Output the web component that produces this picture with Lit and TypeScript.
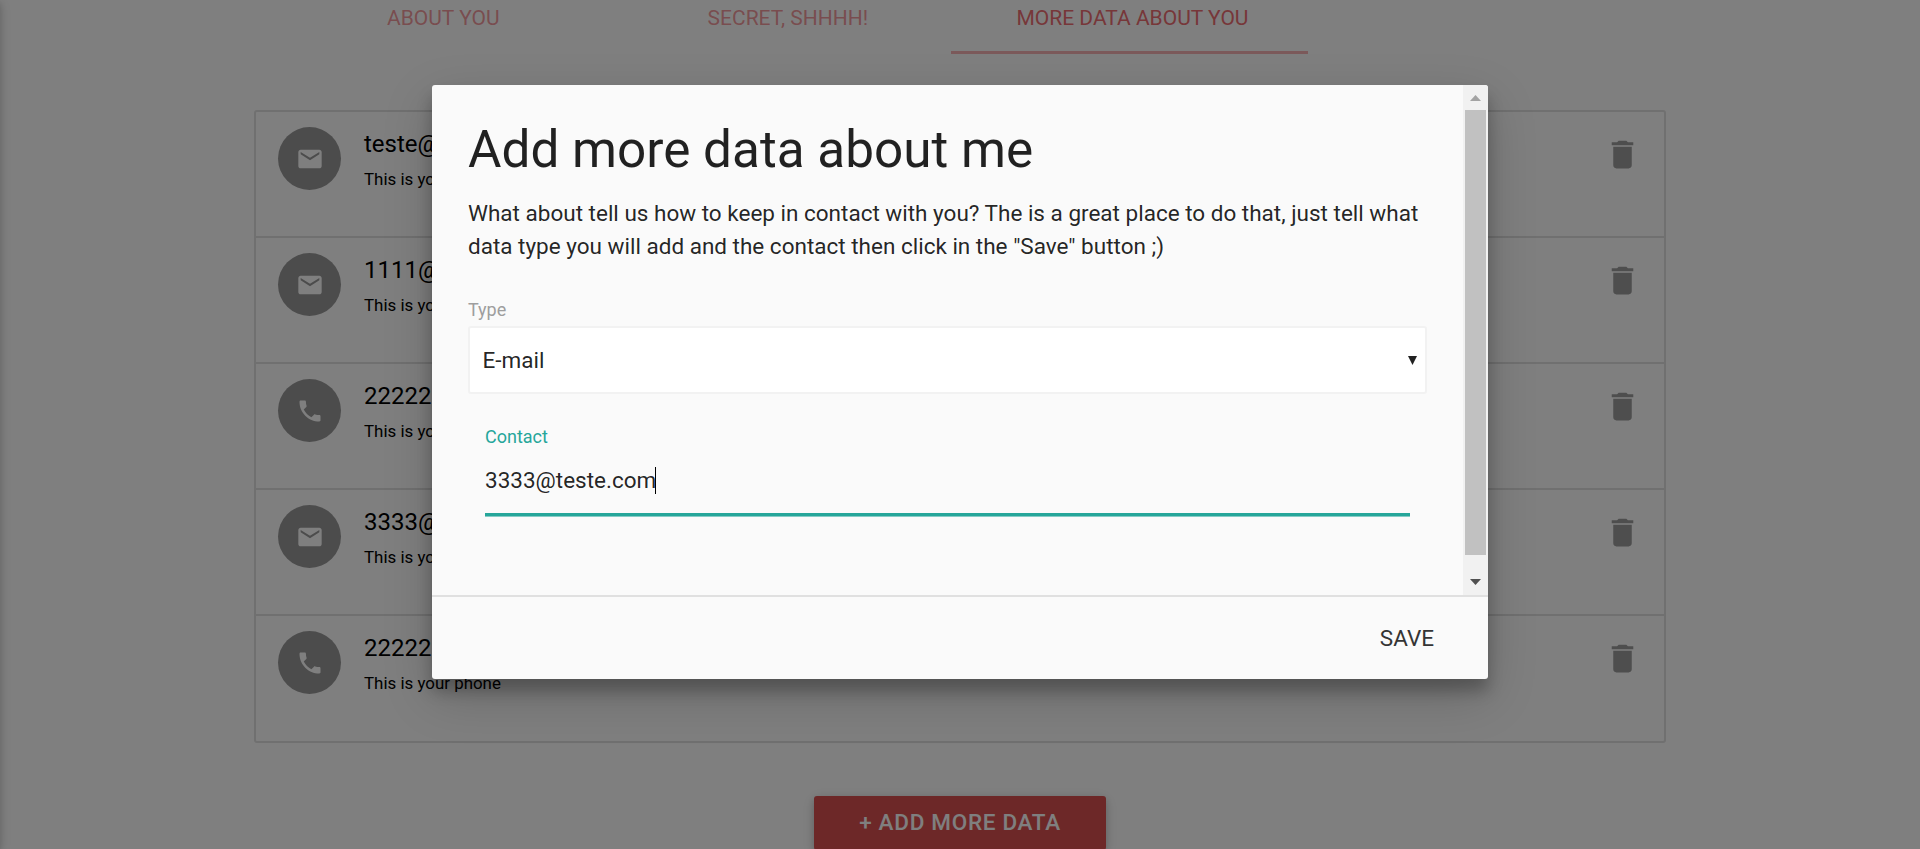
import { LitElement, html, css, svg } from "lit";
import { customElement } from "lit/decorators.js";

const MAIL = svg`<path d="M20 4H4c-1.1 0-1.99.9-1.99 2L2 18c0 1.1.9 2 2 2h16c1.1 0 2-.9 2-2V6c0-1.1-.9-2-2-2zm0 4l-8 5-8-5V6l8 5 8-5v2z"/>`;
const PHONE = svg`<path d="M6.62 10.79c1.44 2.83 3.76 5.14 6.59 6.59l2.2-2.2c.27-.27.67-.36 1.02-.24 1.12.37 2.33.57 3.57.57.55 0 1 .45 1 1V20c0 .55-.45 1-1 1-9.39 0-17-7.61-17-17 0-.55.45-1 1-1h3.5c.55 0 1 .45 1 1 0 1.25.2 2.45.57 3.57.11.35.03.74-.25 1.02l-2.2 2.2z"/>`;
const TRASH = svg`<path d="M6 19c0 1.1.9 2 2 2h8c1.1 0 2-.9 2-2V7H6v12zM19 4h-3.5l-1-1h-5l-1 1H5v2h14V4z"/>`;

const CONTACTS = [
  { kind: "e-mail", value: "teste@teste.com" },
  { kind: "e-mail", value: "1111@teste.com" },
  { kind: "phone", value: "2222222222" },
  { kind: "e-mail", value: "3333@teste.com" },
  { kind: "phone", value: "2222222222" },
];

@customElement("contact-list")
class ContactList extends LitElement {
  static styles = css`
    :host { display: block; }
    .list { box-sizing: border-box; border: 2px solid #e0e0e0; border-radius: 3px; }
    .row {
      box-sizing: border-box; height: 126px; padding: 15px 31px 0 22px;
      border-bottom: 2px solid #e0e0e0; display: flex; align-items: flex-start;
    }
    .row:last-child { height: 125px; border-bottom: 0; }
    .circle {
      width: 63px; height: 63px; border-radius: 50%; background: #999;
      display: flex; align-items: center; justify-content: center; margin-right: 23px;
    }
    .glyph { width: 28px; height: 28px; fill: #fff; }
    .text { flex: 1; color: #000; }
    .value { font-size: 24px; line-height: 34px; }
    .note { font-size: 16.9px; line-height: 36px; }
    .trash { width: 37px; height: 37px; fill: #9c9c9c; margin: 8.5px -8px 0 0; }
  `;
  render() {
    return html`<div class="list">
      ${CONTACTS.map(
        (c) => html`<div class="row">
          <div class="circle">
            <svg class="glyph" viewBox="0 0 24 24">${c.kind === "phone" ? PHONE : MAIL}</svg>
          </div>
          <div class="text">
            <div class="value">${c.value}</div>
            <div class="note">This is your ${c.kind}</div>
          </div>
          <svg class="trash" viewBox="0 0 24 24">${TRASH}</svg>
        </div>`
      )}
    </div>`;
  }
}

@customElement("contact-modal")
class ContactModal extends LitElement {
  static styles = css`
    :host {
      display: flex; flex-direction: column; width: 1056px; height: 594px;
      background: #fafafa; border-radius: 3px; overflow: hidden; color: rgba(0, 0, 0, 0.87);
      box-shadow: 0 12px 15px 0 rgba(0, 0, 0, 0.24), 0 17px 50px 0 rgba(0, 0, 0, 0.19);
    }
    .body { display: flex; height: 510px; }
    .content { flex: 1; padding: 37px 36px 0; }
    .title { margin: 0; font-size: 51.3px; line-height: 56px; font-weight: 400; }
    .intro { margin: 19px 0 0; font-size: 22.5px; line-height: 33px; white-space: nowrap; }
    .label { font-size: 18px; line-height: 24px; color: #9e9e9e; margin-top: 35px; }
    .select {
      box-sizing: border-box; height: 68px; margin-top: 4px; padding: 0 8px 1px 12.5px;
      border: 2px solid #f2f2f2; border-radius: 3px; background: #fff;
      display: flex; align-items: center; justify-content: space-between; font-size: 22.5px;
    }
    .caret { width: 9px; height: 9px; fill: #212121; margin-top: 2px; }
    .field { margin: 31px 17px 0; }
    .field-label { font-size: 18px; line-height: 24px; color: #26a69a; }
    .input {
      margin-top: 8px; height: 59px; display: flex; align-items: flex-start;
      font-size: 22.5px; padding-top: 10px; box-sizing: border-box; line-height: 27px;
      border-bottom: 3px solid #26a69a; box-shadow: 0 1px 0 0 rgba(38, 166, 154, 0.55);
    }
    .cursor { width: 1px; height: 27px; background: #000; margin-left: -1px; }
    .bar {
      width: 25px; background: #f1f1f1; display: flex; flex-direction: column; align-items: center;
    }
    .step { height: 25px; width: 25px; display: block; }
    .thumb { width: 21px; height: 445px; background: #c1c1c1; margin-bottom: 15px; }
    .footer {
      box-sizing: border-box; height: 84px; border-top: 2px solid #e0e0e0; display: flex;
      align-items: center; justify-content: flex-end; padding: 0 54px 1px 0; font-size: 22.5px;
      color: #343434;
    }
  `;
  render() {
    return html`
      <div class="body">
        <div class="content">
          <h4 class="title">Add more data about me</h4>
          <p class="intro">
            What about tell us how to keep in contact with you? The is a great place to do that, just tell what<br />data
            type you will add and the contact then click in the "Save" button ;)
          </p>
          <div class="label">Type</div>
          <div class="select">
            <span>E-mail</span>
            <svg class="caret" viewBox="0 0 9 9"><path d="M0 0h9L4.500 9z" /></svg>
          </div>
          <div class="field">
            <div class="field-label">Contact</div>
            <div class="input"><span>3333@teste.com</span><span class="cursor"></span></div>
          </div>
        </div>
        <div class="bar">
          <svg class="step" viewBox="0 0 25 25"><path d="M7 16L12.500 10L18 16z" fill="#a3a3a3" /></svg>
          <div class="thumb"></div>
          <svg class="step" viewBox="0 0 25 25"><path d="M7 9h11L12.500 15z" fill="#505050" /></svg>
        </div>
      </div>
      <div class="footer">SAVE</div>
    `;
  }
}

@customElement("app-root")
class AppRoot extends LitElement {
  static styles = css`
    :host {
      display: block; position: relative; height: 849px; overflow: hidden; background: #fff;
      font-family: Roboto, "Liberation Sans", sans-serif;
    }
    .side {
      position: absolute; left: -20px; top: 0; width: 20px; height: 100%;
      box-shadow: 0 3px 7.5px 0 rgba(0, 0, 0, 0.16), 0 3px 15px 0 rgba(0, 0, 0, 0.12);
    }
    .page { height: 849px; display: flex; flex-direction: column; align-items: center; }
    .tabs {
      width: 1034px; height: 54px; flex: none; margin-right: 344px;
      display: grid; grid-template-columns: repeat(3, 344.6px);
    }
    .tab {
      text-align: center; font-size: 21px; line-height: 36px; color: rgba(238, 110, 115, 0.7);
      white-space: nowrap;
    }
    .active { color: #ee6e73; }
    .line { grid-column: 3; width: 357px; height: 3px; margin-left: -9px; background: #f6b2b5; align-self: end; }
    .list { width: 1412px; margin-top: 56px; flex: none; }
    .add {
      box-sizing: border-box; width: 292px; height: 54px; margin-top: 53px; flex: none;
      background: #da5050; border-radius: 3px; color: #fff; font-size: 22.5px; font-weight: 500;
      line-height: 52px; text-align: center; letter-spacing: 0.7px;
      box-shadow: 0 3px 7.5px 0 rgba(0, 0, 0, 0.16), 0 3px 15px 0 rgba(0, 0, 0, 0.12);
    }
    .overlay {
      position: absolute; inset: 0; background: rgba(0, 0, 0, 0.5); display: flex;
      justify-content: center; align-items: flex-start; padding-top: 85px;
    }
  `;
  render() {
    return html`
      <div class="page">
        <div class="tabs">
          <div class="tab">ABOUT YOU</div>
          <div class="tab">SECRET, SHHHH!</div>
          <div class="tab active">MORE DATA ABOUT YOU</div>
          <div class="line"></div>
        </div>
        <contact-list class="list"></contact-list>
        <div class="add">+ ADD MORE DATA</div>
      </div>
      <div class="side"></div>
      <div class="overlay"><contact-modal></contact-modal></div>
    `;
  }
}
